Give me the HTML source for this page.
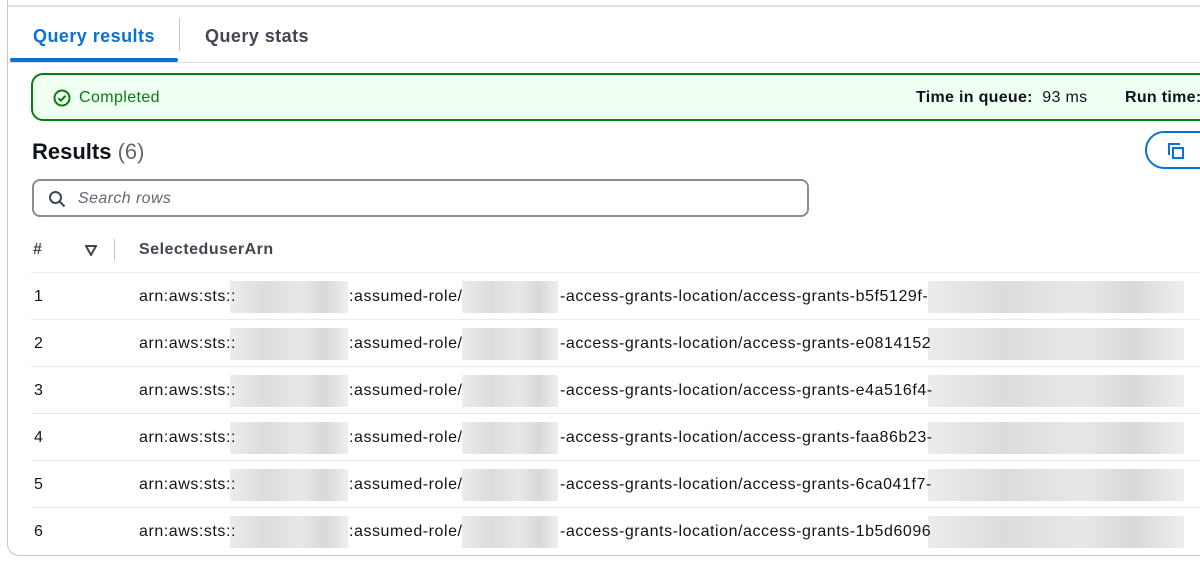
<!DOCTYPE html>
<html><head><style>
*{margin:0;padding:0;box-sizing:border-box}
body{width:1200px;height:578px;background:#fff;font-family:"Liberation Sans",sans-serif;position:relative;overflow:hidden;color:#0f141a}
.panel{position:absolute;left:7px;top:-10px;width:1210px;height:566px;border:1px solid #c6c6cd;border-radius:12px}
.topline{position:absolute;left:7px;top:5px;width:1193px;height:2px;background:#dedee3}
.tab{position:absolute;top:26px;font-size:18px;font-weight:bold;letter-spacing:0.45px}
.tabline{position:absolute;left:8px;top:62px;width:1192px;height:1px;background:#dedee3}
.sel{position:absolute;left:10px;top:58px;width:168px;height:4px;background:#0972d3;border-radius:2px}
.alert{position:absolute;left:31px;top:73px;width:1190px;height:48px;background:#effff1;border:2px solid #037f0c;border-radius:12px}
.alert .c{position:absolute;left:46px;top:14px;font-size:16px;color:#037f0c;letter-spacing:0.4px}
.m{position:absolute;top:14px;font-size:16px;letter-spacing:0.3px}
.h{position:absolute;left:32px;top:139px;font-size:22px;font-weight:bold}
.h span{font-weight:normal;color:#656871}
.search{position:absolute;left:32px;top:179px;width:777px;height:38px;border:2px solid #8c8c94;border-radius:8px}
.search i{position:absolute;left:44px;top:9px;font-size:16px;color:#656871;letter-spacing:0.4px}
.copy{position:absolute;left:1145px;top:131px;width:80px;height:38px;border:2px solid #0972d3;border-radius:20px}
.th{position:absolute;top:241px;font-size:16px;font-weight:bold;color:#424650;letter-spacing:0.5px}
.row{position:absolute;left:31px;width:1170px;height:47px;border-top:1px solid #e9ebed;font-size:16px;letter-spacing:0.55px}
.row div{position:absolute;top:15px}
.b{position:absolute;top:8px;height:32px;background:linear-gradient(90deg,#ececec,#dcdcdc 30%,#e8e8e8 60%,#d8d8d8 80%,#eeeeee)}
</style></head><body>
<div class="topline"></div>
<div class="panel"></div>
<div class="tab" style="left:33px;color:#0972d3">Query results</div>
<div style="position:absolute;left:179px;top:18px;width:1px;height:33px;background:#c6c6cd"></div>
<div class="tab" style="left:205px;color:#424650">Query stats</div>
<div class="tabline"></div><div class="sel"></div>
<div class="alert">
<svg style="position:absolute;left:20px;top:14px" width="18" height="18" viewBox="0 0 18 18"><circle cx="9" cy="9" r="7.5" fill="none" stroke="#037f0c" stroke-width="2"/><path d="M5.5 9.2l2.4 2.4 4.6-4.8" fill="none" stroke="#037f0c" stroke-width="2"/></svg>
<div class="c">Completed</div>
<div class="m" style="left:883px"><b>Time in queue:</b>&nbsp; 93 ms</div>
<div class="m" style="left:1092px"><b>Run time:</b></div>
</div>
<div class="h">Results <span>(6)</span></div>
<div class="copy"><svg style="position:absolute;left:20px;top:9px" width="18" height="18" viewBox="0 0 18 18"><path d="M2 13V2h11" fill="none" stroke="#0972d3" stroke-width="2"/><rect x="6" y="6" width="10" height="10" fill="none" stroke="#0972d3" stroke-width="2"/></svg></div>
<div class="search"><svg style="position:absolute;left:14px;top:9px" width="18" height="18" viewBox="0 0 18 18"><circle cx="7.5" cy="7.5" r="5.5" fill="none" stroke="#424650" stroke-width="2"/><path d="M11.5 11.5l5 5" stroke="#424650" stroke-width="2"/></svg><i>Search rows</i></div>
<div class="th" style="left:33px">#</div>
<svg style="position:absolute;left:85px;top:245px" width="12" height="11" viewBox="0 0 12 11"><path d="M1 1h10L6 10z" fill="none" stroke="#424650" stroke-width="2"/></svg>
<div style="position:absolute;left:114px;top:239px;width:1px;height:22px;background:#c6c6cd"></div>
<div class="th" style="left:139px">SelecteduserArn</div>
<div class="row" style="top:272px"><div style="left:3px">1</div><span class="b" style="left:199px;width:118px"></span><span class="b" style="left:431px;width:96px"></span><span class="b" style="left:897px;width:256px"></span><div style="left:108px">arn:aws:sts::</div><div style="left:318px">:assumed-role/</div><div style="left:529px">-access-grants-location/access-grants-b5f5129f-</div></div>
<div class="row" style="top:319px"><div style="left:3px">2</div><span class="b" style="left:199px;width:118px"></span><span class="b" style="left:431px;width:96px"></span><span class="b" style="left:897px;width:256px"></span><div style="left:108px">arn:aws:sts::</div><div style="left:318px">:assumed-role/</div><div style="left:529px">-access-grants-location/access-grants-e0814152</div></div>
<div class="row" style="top:366px"><div style="left:3px">3</div><span class="b" style="left:199px;width:118px"></span><span class="b" style="left:431px;width:96px"></span><span class="b" style="left:897px;width:256px"></span><div style="left:108px">arn:aws:sts::</div><div style="left:318px">:assumed-role/</div><div style="left:529px">-access-grants-location/access-grants-e4a516f4-</div></div>
<div class="row" style="top:413px"><div style="left:3px">4</div><span class="b" style="left:199px;width:118px"></span><span class="b" style="left:431px;width:96px"></span><span class="b" style="left:897px;width:256px"></span><div style="left:108px">arn:aws:sts::</div><div style="left:318px">:assumed-role/</div><div style="left:529px">-access-grants-location/access-grants-faa86b23-</div></div>
<div class="row" style="top:460px"><div style="left:3px">5</div><span class="b" style="left:199px;width:118px"></span><span class="b" style="left:431px;width:96px"></span><span class="b" style="left:897px;width:256px"></span><div style="left:108px">arn:aws:sts::</div><div style="left:318px">:assumed-role/</div><div style="left:529px">-access-grants-location/access-grants-6ca041f7-</div></div>
<div class="row" style="top:507px"><div style="left:3px">6</div><span class="b" style="left:199px;width:118px"></span><span class="b" style="left:431px;width:96px"></span><span class="b" style="left:897px;width:256px"></span><div style="left:108px">arn:aws:sts::</div><div style="left:318px">:assumed-role/</div><div style="left:529px">-access-grants-location/access-grants-1b5d6096</div></div>
</body></html>
